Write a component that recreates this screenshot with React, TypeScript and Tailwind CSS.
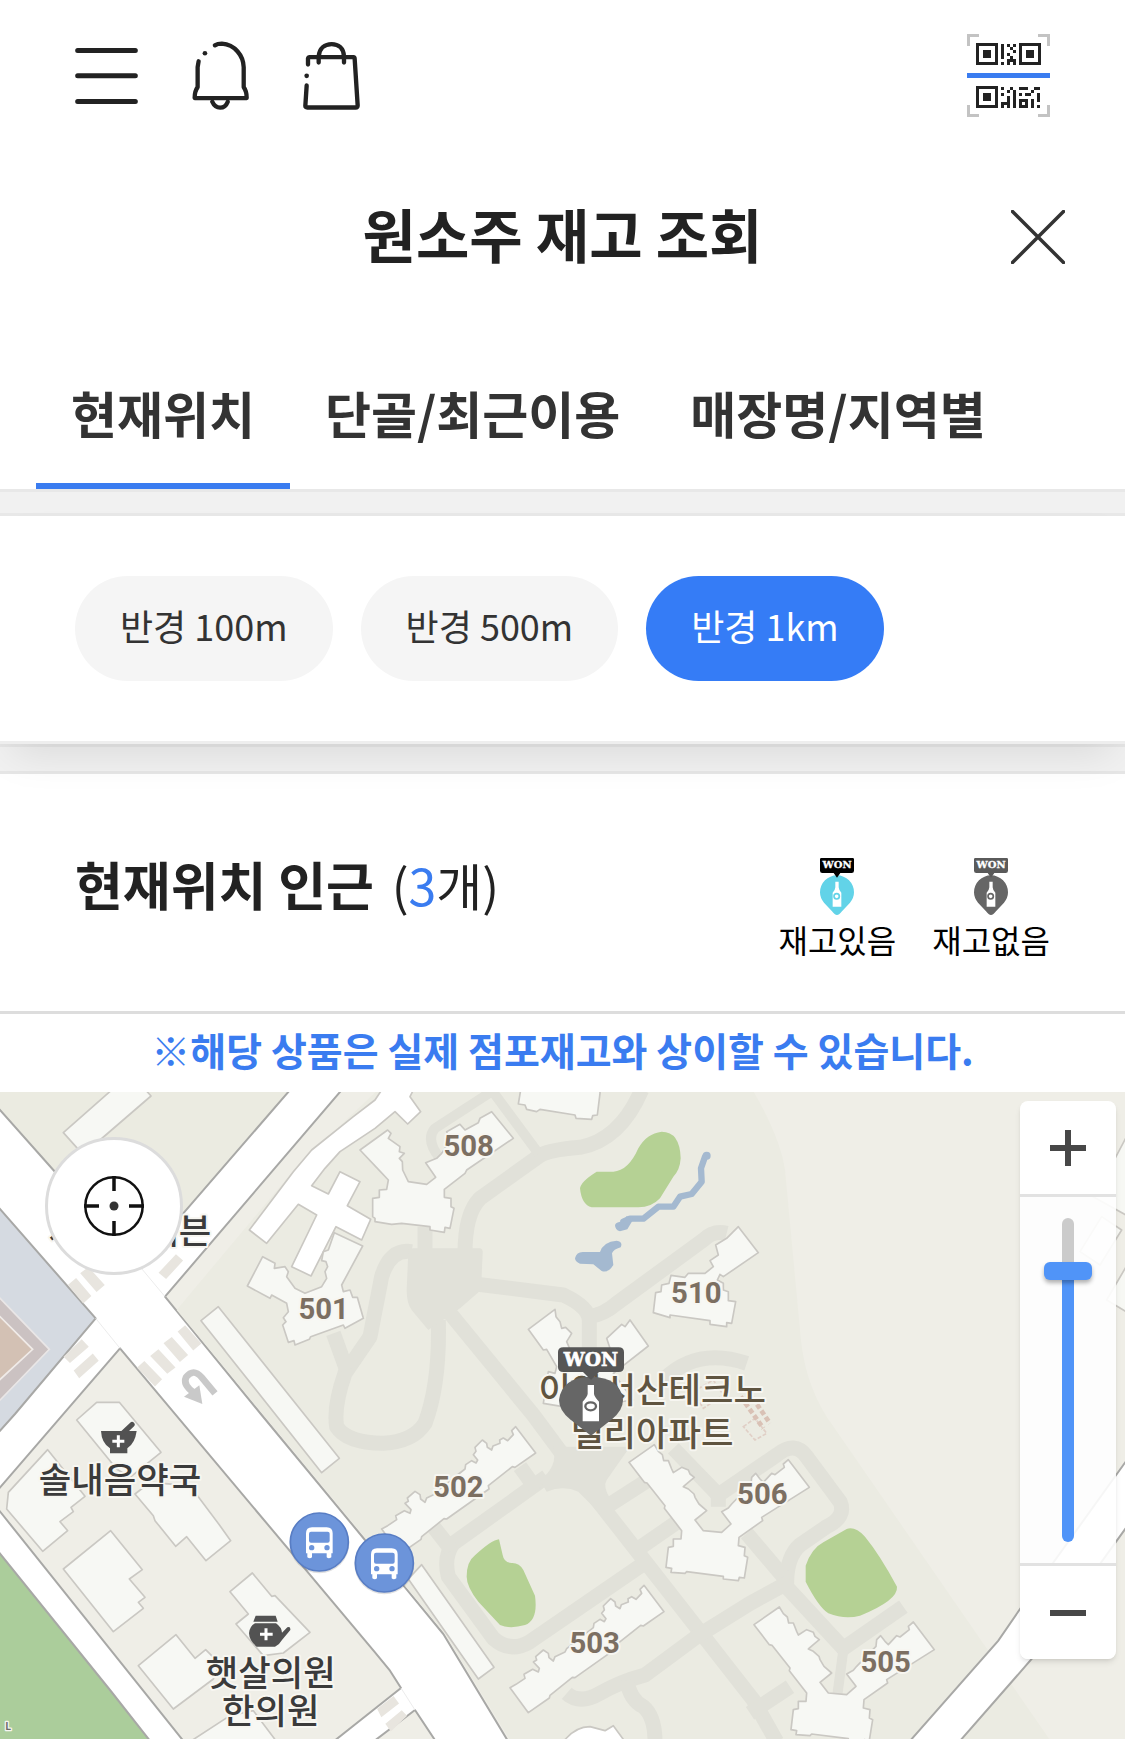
import { useState } from 'react';
import clsx from 'clsx';

const TABS = ['현재위치', '단골/최근이용', '매장명/지역별'];
const RADII = ['반경 100m', '반경 500m', '반경 1km'];
const MAX_LEVEL = 14;

/* columns 8 to 20 of the code, the finder squares are drawn apart */
const QR_TOP = ['X.X.X', 'X..X.', 'X...X', 'X.X..', 'X..X.', '..XXX', 'X.X.X'];

const QR_BOTTOM = [
  'X..X..XXX..XX',
  '..X.X.....X..',
  'X...X.X.XX..X',
  '..X.X.......X',
  '..X.X.XXX.X.X',
  'XXX.X.X.X.X..',
  'X.X.X.XXX.X.X',
];

function Modules({ rows, y }: { rows: string[]; y: number }) {
  return (
    <g transform={`translate(34 ${y}) scale(3)`} fill="#222">
      {rows.map((row, r) =>
        [...row].map((cell, c) =>
          cell === 'X' ? <rect key={`${r}-${c}`} x={c} y={r} width="1" height="1" /> : null
        )
      )}
    </g>
  );
}

function Finder({ x, y }: { x: number; y: number }) {
  return (
    <g transform={`translate(${x} ${y})`}>
      <path d="M0 0H22V22H0ZM3 3V19H19V3Z" fill="#222" fillRule="evenodd" />
      <rect x="7" y="7" width="8" height="8" fill="#222" />
    </g>
  );
}

function QrIcon() {
  return (
    <svg viewBox="0 0 83 83" className="size-[83px]" shapeRendering="crispEdges">
      <path
        d="M1.5 12V1.5H12M71 1.5H81.5V12M1.5 71V81.5H12M71 81.5H81.5V71"
        fill="none"
        stroke="#c3c3c3"
        strokeWidth="3"
      />
      <Finder x={9} y={9} />
      <Modules rows={QR_TOP} y={10} />
      <Finder x={52} y={9} />
      <rect y="39" width="83" height="5" fill="#3a7cf0" />
      <Finder x={9} y={52} />
      <Modules rows={QR_BOTTOM} y={53} />
    </svg>
  );
}

function MenuIcon() {
  return (
    <svg viewBox="105 93 189 206" className="h-[69px] w-[63px]" fill="none" stroke="#222" strokeWidth="15" strokeLinecap="round">
      <path d="M113 121H286M113 197H286M113 274H286" />
    </svg>
  );
}

function BellIcon() {
  return (
    <svg viewBox="455 92 172 206" className="h-[69px] w-[57px]" fill="none" stroke="#222" strokeWidth="13" strokeLinecap="round" strokeLinejoin="round">
      <path d="M524 104Q532 99 545 99C585 102 610 135 611 170V230Q620 242 620 263H463Q463 242 472 230V170L475 152" />
      <path d="M516 274Q524 292 540 292Q556 292 563 274" />
      <circle cx="494" cy="128" r="7" fill="#222" stroke="none" />
    </svg>
  );
}

function BagIcon() {
  return (
    <svg viewBox="789 92 171 206" className="h-[69px] w-[57px]" fill="none" stroke="#222" strokeWidth="13" strokeLinecap="round" strokeLinejoin="round">
      <path d="M804 162V144Q805 140 809 140H940Q944 140 944 145L953 285Q953 291 947 291H802Q796 291 796 286L800 225" />
      <path d="M836 156V138C838 113 855 101 875 101S911 113 912 138V156" />
      <circle cx="800" cy="196" r="7" fill="#222" stroke="none" />
    </svg>
  );
}

function WonPin({ tag, body }: { tag: string; body: string }) {
  return (
    <svg viewBox="0 0 102 171" className="h-[57px] w-[34px]">
      <path d="M51 171Q44 171 36 160L12 134Q0 120 0 103A51 51 0 0 1 102 103Q102 120 90 134L66 160Q58 171 51 171Z" fill={body} />
      <path d="M4 0H98Q102 0 102 4V38Q102 45 95 45H61L51 59L41 45H7Q0 45 0 38V4Q0 0 4 0Z" fill={tag} />
      <text x="51" y="31" textAnchor="middle" fontSize="30" fontWeight="700" fill="#fff" stroke="#fff" strokeWidth="1" fontFamily="DejaVu Serif, serif">
        WON
      </text>
      <path d="M46 71H56V88Q56 95 64 104V146H38V104Q46 95 46 88Z" fill="#fff" />
      <circle cx="50" cy="115" r="8" fill="#fff" stroke={body} strokeWidth="5" />
    </svg>
  );
}

/* Map shapes. Three units to one pixel. */
const SLAB =
  'M422 38L482 117L420 160L412 158L340 215L342 225L215 315L207 314L140 368L138 376L75 420L20 345L38 335L65 317L62 305L88 290L105 298L108 287L90 268L100 262L97 252L120 232L135 242L137 255L150 265L155 252L185 238L190 228L270 165L272 152L290 140L303 147L308 138L295 122L303 112L300 100L322 78L335 88L337 100L350 108L354 96L375 88L374 78L385 72L398 80L415 62L410 50Z';
const WINGS =
  'M838 92L762 145L808 205L816 207L870 275L868 283L920 350L918 375L895 375L895 397L880 400L873 460L890 463L888 475L930 478L935 473L1045 487L1045 495L1090 500L1093 490L1108 492L1118 430L1108 425L1110 400L1090 395L1092 370L1163 320L1160 310L1303 220L1240 137L1225 150L1228 160L1200 182L1190 178L1165 205L1155 195L1142 178L1130 190L1128 210L1070 270L1060 282L1040 293L1068 330L1040 355L985 350L960 318L995 290L972 270L960 250L957 240L940 225L925 218L940 205L958 190L945 180L940 168L920 160L895 176L890 165L880 140L866 140L862 122L850 112Z';

const BLOCK_LABELS = [
  { text: '508', x: 1406, y: 197 },
  { text: '501', x: 971, y: 688 },
  { text: '510', x: 2089, y: 638 },
  { text: '502', x: 1375, y: 1220 },
  { text: '506', x: 2287, y: 1242 },
  { text: '503', x: 1784, y: 1690 },
  { text: '505', x: 2657, y: 1745 },
];

const PLACE_LABELS = [
  { lines: ['세븐일레븐'], x: 390, y: 461, step: 0, fill: '#3b3b3b' },
  { lines: ['솔내음약국'], x: 360, y: 1208, step: 0, fill: '#3b3b3b' },
  { lines: ['햇살의원', '한의원'], x: 812, y: 1787, step: 116, fill: '#3b3b3b' },
  { lines: ['이안서산테크노', '밸리아파트'], x: 1957, y: 939, step: 129, fill: '#5f5440' },
];

function BusStop({ x, y }: { x: number; y: number }) {
  return (
    <g transform={`translate(${x} ${y})`}>
      <circle cy="4" r="90" fill="#000" opacity=".12" />
      <circle r="87" fill="#6c94da" stroke="#587dc4" strokeWidth="5" />
      <path d="M-22 -44H22Q40 -44 40 -26V34H36V46Q28 52 22 46V34H-22V46Q-28 52 -36 46V34H-40V-26Q-40 -44 -22 -44Z" fill="#fff" />
      <rect x="-31" y="-31" width="62" height="33" rx="6" fill="#6c94da" />
      <circle cx="-23" cy="17" r="8" fill="#6c94da" />
      <circle cx="23" cy="17" r="8" fill="#6c94da" />
    </g>
  );
}

function MapCanvas() {
  return (
    <svg viewBox="0 6 3375 1941" preserveAspectRatio="xMidYMid slice" className="block size-full">
      <rect width="3375" height="1950" fill="#fff" />

      {/* land */}
      <g stroke="#a8a8a6" strokeWidth="6" strokeLinejoin="round">
        <path d="M-9 0V50L160 240L420 520L870 0Z" fill="#ebebe1" />
        <path d="M-9 347L287 685L45 972L-9 1032Z" fill="#d5dae1" />
        <path d="M360 775L1125 1687L1170 1742L1203 1794L1000 1955H552L-30 1227Z" fill="#efeee7" />
        <path d="M-9 1380L330 1800L452 1955H-9Z" fill="#abcd9b" />
        <path d="M1245 1860L1120 1955H1308Z" fill="#efeee7" />
        <path d="M1025 0L495 620L785 975L1095 1350L1215 1492L1330 1632L1525 1955H3390V0Z" fill="#efeee7" />
      </g>
      <path d="M1130 3L890 230L530 660L1215 1487L1335 1632L1530 1950H3150L2970 1690L2480 980Q2410 870 2400 720L2355 240Q2340 140 2258 0Z" fill="#ebebe2" />
      <path d="M2728 1955L2995 1652L3060 1557L3390 1097V1297L3095 1707L2878 1955Z" fill="#fff" stroke="#a8a8a6" strokeWidth="6" />
      <path d="M-20 604L148 778L-20 951Z" fill="#cbc2c2" stroke="#e9e6e6" strokeWidth="5" />
      <path d="M-20 660L98 778L-20 887Z" fill="#d3c1b4" stroke="#f0ebe8" strokeWidth="5" />

      {/* crosswalks */}
      <path
        d="M245 550L265 535L310 585L290 602ZM208 585L228 568L270 618L250 636ZM480 548L528 497L545 512L498 563ZM195 800L245 752L262 770L210 815ZM225 842L278 795L292 812L238 860ZM415 833L433 817L482 868L465 885ZM455 798L475 782L522 832L502 847ZM495 760L515 745L560 795L540 812ZM537 725L555 710L600 760L580 777ZM1135 1857L1180 1822L1193 1840L1145 1877ZM1160 1902L1205 1865L1217 1877L1173 1920Z"
        fill="#e8e5df"
        stroke="#e8e5df"
        strokeWidth="6"
      />
      <path d="M287 685L360 775M420 530L495 620M1203 1794L1245 1860" stroke="#ececec" strokeWidth="3" />
      <path d="M645 910L605 862Q580 833 558 862Q548 885 582 908" fill="none" stroke="#c9c9c9" strokeWidth="20" />
      <path d="M552 920L607 942L598 886Z" fill="#c9c9c9" />

      {/* footpaths */}
      <g fill="none" stroke="#e1e1d9" strokeWidth="45" strokeLinejoin="round">
        <path d="M1925 0Q1860 150 1740 172Q1640 180 1615 200L1440 325Q1395 370 1395 490" />
        <path d="M1475 0L1615 190M1470 8L1305 115Q1275 150 1320 205" strokeWidth="30" />
        <path d="M1275 410V500M1235 485Q1170 475 1145 560L1110 740L1035 850Q1000 950 1010 1010Q1040 1058 1150 1060Q1240 1055 1275 1000Q1320 880 1315 690" />
        <path d="M1000 730L1040 840" />
        <path d="M1435 583L1690 615Q1765 650 1768 690V820M1765 680Q1810 675 1850 640L2110 450Q2140 420 2180 430" />
        <path d="M1350 670L1600 975L1700 1110" />
        <path d="M1990 870Q2090 770 2240 820" />
        <path d="M1640 1160L1360 1360Q1330 1400 1345 1460L1480 1645Q1530 1690 1590 1655L1925 1425" />
        <path d="M1760 1190L2260 1830L2330 1955M1820 1250L1960 1160M1910 1380L2040 1290M1560 1130L1610 1200M1300 1310L1355 1380" />
        <path d="M2020 1075L2155 1215L2330 1095Q2385 1050 2420 1100L2520 1235Q2540 1280 2480 1310L2400 1365Q2360 1400 2360 1480L2250 1540L2090 1640L1935 1755Q1860 1775 1800 1810Q1740 1845 1700 1810" />
        <path d="M2155 1215V1250M2240 1330L2350 1460M2350 1480L2530 1675L2710 1550M1880 1770Q1890 1830 1930 1850Q1965 1880 1965 1955M2370 1790L2250 1870" />
        <path d="M2530 1680L2510 1830" strokeWidth="30" />
      </g>
      <path d="M1225 485Q1225 475 1240 475H1440Q1450 478 1448 490L1443 600L1380 655L1285 720L1235 660Q1220 640 1220 600Z" fill="#e1e1d9" />
      <path d="M1660 1070H1890L1820 1170Q1808 1190 1830 1225L1800 1270L1735 1205Q1690 1185 1640 1205L1620 1170Q1675 1130 1660 1070Z" fill="#e1e1d9" />

      {/* green and water */}
      <g fill="#b5d194">
        <path d="M1790 245H1840Q1885 243 1915 175Q1940 130 1985 125Q2040 125 2042 205Q2040 240 2020 260L1980 325Q1955 352 1915 352H1775Q1745 345 1740 295Q1742 275 1790 245Z" />
        <path d="M1497 1348L1508 1395Q1512 1418 1535 1419Q1558 1418 1570 1440L1605 1517Q1615 1590 1575 1605Q1530 1618 1500 1605L1435 1535Q1400 1490 1400 1460Q1400 1415 1425 1396Q1475 1350 1497 1348Z" />
        <path d="M2540 1317Q2565 1308 2595 1340Q2640 1395 2691 1490Q2695 1530 2580 1577Q2535 1590 2485 1570Q2455 1550 2417 1475V1427Q2435 1375 2470 1357Z" />
      </g>
      <g fill="#a4b9d0">
        <path d="M1870 395L1890 386H1930L1975 350H2020L2040 320L2075 312L2105 275L2103 235L2115 200" fill="none" stroke="#a4b9d0" strokeWidth="19" strokeLinecap="round" strokeLinejoin="round" />
        <circle cx="2120" cy="197" r="12" />
        <path d="M1880 378L1900 388L1882 418L1860 424Q1845 420 1845 405Q1848 396 1870 394Z" />
        <path d="M1725 505Q1730 485 1750 486H1800Q1810 455 1850 452Q1870 455 1862 472Q1840 478 1836 490L1840 525Q1825 550 1805 543L1780 523L1740 521Q1725 515 1725 505Z" />
      </g>

      {/* buildings */}
      <g fill="#f7f8f4" stroke="#cac8c3" strokeWidth="5" strokeLinejoin="round">
        <path d="M335 0L190 128L235 178L300 150L453 18L437 0Z" />
        <path
          d="M1145 0L1125 30L1060 80L935 180L880 245L748 420L800 460L895 343L950 375L875 530L933 558L1008 410L1085 450L1112 388L1042 347L1080 275L1020 245L985 312L935 287L975 235L1020 185L1125 115L1185 65L1223 102L1262 65L1230 20L1240 0Z"
          fill="#fff"
        />
        <path d="M1003 428L1088 468L1025 585L1030 605L1050 600L1058 622L1072 622L1090 685L1035 715L1030 705L932 740L928 748L885 765L882 752L865 757L848 705L858 695L850 683L865 665L860 640L815 615L810 625L742 588L788 500L825 520L823 535L855 530L865 545L860 560L885 595L915 610L965 590L980 565L975 545L983 530L978 515L965 512L970 485L985 480Z" />
        <path d="M655 650L1018 1105L965 1148L603 692Z" />
        <path d="M1080 180L1163 120L1173 130L1165 145L1200 170L1198 185L1213 190L1198 205L1207 215L1208 240L1225 275L1280 283L1307 262L1277 218L1310 205L1325 190L1350 150L1340 125L1380 103L1395 120L1435 98L1440 85L1475 65L1540 145L1400 240L1395 250L1333 298V322L1353 325V350L1362 355L1350 415L1335 412L1333 427L1290 420V410L1205 400L1175 403L1125 395V385L1118 380V325L1138 322V300L1160 298L1165 270L1135 238Z" />
        <path d="M1562 0L1555 42L1575 45L1580 58L1610 65L1620 58L1725 75L1728 85L1775 88L1778 77L1792 75L1800 10V0Z" />
        <path d="M2215 410L2275 488L2170 560L2160 553L2152 570L2170 580V600L2185 605V632L2207 635L2195 700L2180 698V710L2130 703V692L2010 675V683L1960 668L1967 608L1983 605L1985 585L2007 580L2013 556L2055 562L2065 550L2115 550L2140 530L2130 512L2155 495L2147 465L2180 445L2200 425Z" />
        <path d="M1665 658L1585 718L1630 780L1640 778L1670 830L1665 850L1645 845L1630 940L1720 955L1900 930L1840 850L1945 768L1890 690L1875 710L1865 703L1820 745L1830 775L1780 830L1715 790L1700 755L1715 730L1697 712L1685 715L1680 695L1668 680Z" />
        <path d="M1265 1424L1482 1732L1435 1767L1225 1467Z" />
        <path d={SLAB} transform="translate(1125 972)" />
        <path d={SLAB} transform="translate(1510 1448)" />
        <path d={WINGS} transform="translate(1125 972)" />
        <path d={WINGS} transform="translate(1500 1459)" />
        <path d="M1690 1955Q1725 1910 1770 1910L1815 1922L1840 1907L1875 1955Z" fill="#fff" />
        <g transform="translate(0 972)">
          <path d="M143 107L25 235L20 285L128 412L203 350L180 323L220 293L213 280L255 247Z" />
          <path d="M230 18L290 -35H358L483 115L390 190L350 165Z" />
          <path d="M405 240L450 205L570 215L660 335L692 380L618 440L560 368L527 397L465 320L460 305Z" />
          <path d="M332 350L190 465L340 653L430 583L415 565L435 550L388 495L427 467Z" />
          <path d="M757 477L690 533L745 600L708 630L790 725L850 717L930 655L825 545L815 547Z" />
          <path d="M528 662L415 755L520 885L640 795L660 750L617 707L585 733Z" />
          <path d="M570 983L690 905L760 890L830 983Z" />
        </g>
        <path d="M3390 120L3348 200L3270 315L3390 382ZM3305 380L3365 420L3300 525L3240 485ZM3390 510L3320 630L3390 672Z" />
      </g>
      <path d="M2080 905L2140 870L2170 915L2110 955ZM2230 1010L2265 985L2300 1030L2265 1050Z" fill="none" stroke="#e0cfc6" strokeWidth="5" strokeDasharray="12 5" />
      <path d="M2222 920L2290 1015M2245 905L2310 1000" stroke="#d9c1b5" strokeWidth="14" strokeDasharray="15 8" />

      {/* pharmacy and clinic */}
      <g fill="#525252">
        <path d="M303 1023H410Q405 1060 382 1075V1090H330V1075Q305 1060 303 1023Z" />
        <path d="M368 1030L396 1004" stroke="#525252" strokeWidth="16" strokeLinecap="round" />
        <path d="M767 1577H827L833 1595H760ZM765 1600H828Q845 1612 846 1628L862 1612Q872 1608 871 1620L846 1650Q840 1662 825 1670H770Q748 1652 747 1630Q748 1610 765 1600Z" />
      </g>
      <path d="M355 1036V1072M337 1054H373M798 1615V1651M780 1633H818" stroke="#fff" strokeWidth="9" />

      <g textAnchor="middle" strokeLinejoin="round" style={{ paintOrder: 'stroke' }}>
        {BLOCK_LABELS.map((l) => (
          <text key={l.text} x={l.x} y={l.y} fontSize="88" fontWeight="700" fill="#7c6f62" stroke="#f7f6f1" strokeWidth="12" fontFamily="Roboto, sans-serif">
            {l.text}
          </text>
        ))}
        {PLACE_LABELS.map((l) => (
          <text key={l.lines[0]} y={l.y} fontSize="106" fontWeight="500" fill={l.fill} stroke="#f7f6f1" strokeWidth="12" fontFamily="Noto Sans CJK KR, sans-serif">
            {l.lines.map((line, i) => (
              <tspan key={line} x={l.x} dy={i * l.step}>
                {line}
              </tspan>
            ))}
          </text>
        ))}
        <text x="25" y="1920" fontSize="30" fontWeight="700" fill="#6b6b6b" stroke="#f7f6f1" strokeWidth="8" fontFamily="Roboto, sans-serif">
          L
        </text>
      </g>

      <BusStop x={958} y={1356} />
      <BusStop x={1153} y={1419} />

      {/* out-of-stock marker */}
      <path d="M1773 1037L1710 988Q1677 960 1677 930Q1685 862 1773 860Q1861 862 1869 930Q1869 960 1836 988Z" fill="#666" />
      <path d="M1690 772H1856Q1872 772 1872 786V832Q1872 846 1856 846H1797L1773 870L1749 846H1690Q1674 846 1674 832V786Q1674 772 1690 772Z" fill="#565656" />
      <text x="1773" y="829" textAnchor="middle" fontSize="56" fontWeight="700" fill="#fff" stroke="#fff" strokeWidth="2" fontFamily="DejaVu Serif, serif">
        WON
      </text>
      <path d="M1763 885H1782V912Q1784 922 1797 935V994H1748V935Q1761 922 1763 912Z" fill="#fff" />
      <ellipse cx="1772" cy="949" rx="16" ry="12" fill="#fff" stroke="#666" strokeWidth="7" />
    </svg>
  );
}

function ZoomControl() {
  const [level, setLevel] = useState(12);

  return (
    <div className="absolute top-[9px] right-[9px] flex w-24 flex-col overflow-hidden rounded-lg shadow-md">
      <button
        type="button"
        aria-label="확대"
        className="flex h-[93px] items-center justify-center bg-white"
        onClick={() => setLevel(Math.min(MAX_LEVEL, level + 1))}
      >
        <svg viewBox="0 0 36 36" className="size-9" stroke="#474747" strokeWidth="6">
          <path d="M0 18H36M18 0V36" />
        </svg>
      </button>
      <div className="flex h-[372px] items-center justify-center border-y-3 border-[#e2e2e2] bg-white/90">
        <input
          type="range"
          aria-label="지도 확대 수준"
          min={0}
          max={MAX_LEVEL}
          value={level}
          onChange={(e) => setLevel(Number(e.target.value))}
          className="h-[324px] w-3 appearance-none rounded-full bg-linear-to-t from-[#5094f8] from-84% to-[#cbcbcb] to-84% [direction:rtl] [writing-mode:vertical-lr] [&::-webkit-slider-thumb]:h-[18px] [&::-webkit-slider-thumb]:w-12 [&::-webkit-slider-thumb]:appearance-none [&::-webkit-slider-thumb]:rounded-md [&::-webkit-slider-thumb]:bg-[#5094f8] [&::-webkit-slider-thumb]:shadow-[0_3px_4px_rgba(0,0,0,0.3)]"
        />
      </div>
      <button
        type="button"
        aria-label="축소"
        className="flex h-[93px] items-center justify-center bg-white"
        onClick={() => setLevel(Math.max(0, level - 1))}
      >
        <svg viewBox="0 0 36 36" className="size-9" stroke="#474747" strokeWidth="6">
          <path d="M0 18H36" />
        </svg>
      </button>
    </div>
  );
}

export default function App() {
  const [tab, setTab] = useState(TABS[0]);
  const [radius, setRadius] = useState(RADII[2]);

  return (
    <div className="w-full overflow-hidden bg-white font-['Noto_Sans_CJK_KR',sans-serif] text-[#222]">
      {/* toolbar */}
      <header className="flex h-[150px] items-center justify-between px-[75px]">
        <div className="flex items-center gap-[54px]">
          <button type="button" aria-label="메뉴"><MenuIcon /></button>
          <button type="button" aria-label="알림"><BellIcon /></button>
          <button type="button" aria-label="장바구니"><BagIcon /></button>
        </div>
        <button type="button" aria-label="QR"><QrIcon /></button>
      </header>

      {/* title */}
      <div className="relative flex h-[174px] items-center justify-center">
        <h1 className="pb-2 text-[58px] leading-[72px] font-bold">원소주 재고 조회</h1>
        <button type="button" aria-label="닫기" className="absolute right-[60px]">
          <svg viewBox="0 0 54 54" className="size-[54px]" stroke="#333" strokeWidth="3.5" strokeLinecap="round">
            <path d="M1.5 1.5L52.5 52.5M52.5 1.5L1.5 52.5" />
          </svg>
        </button>
      </div>

      {/* tabs */}
      <nav className="flex h-[165px] px-9">
        {TABS.map((name) => (
          <button
            key={name}
            type="button"
            onClick={() => setTab(name)}
            className={clsx(
              'border-b-6 px-[35px] pt-4 text-[50px] leading-[60px] font-bold whitespace-nowrap text-[#333]',
              tab === name ? 'border-[#3a7cf0]' : 'border-transparent'
            )}
          >
            {name}
          </button>
        ))}
      </nav>
      <div className="h-[27px] border-y-3 border-[#e8e8e8] bg-[#f1f1f1]" />

      {/* radius filter */}
      <section className="relative z-10 flex h-[228px] items-center gap-7 border-b-3 border-[#eee] bg-white px-[75px] shadow-[0_20px_40px_-12px_rgba(0,0,0,0.1)]">
        {RADII.map((name) => (
          <button
            key={name}
            type="button"
            onClick={() => setRadius(name)}
            className={clsx(
              'h-[105px] rounded-full px-[45px] pb-2 text-[36px] leading-[48px]',
              radius === name ? 'bg-[#357cf6] text-white' : 'bg-[#f5f5f5] text-[#333]'
            )}
          >
            {name}
          </button>
        ))}
      </section>
      <div className="h-[30px] border-y-3 border-[#e6e6e6] bg-[#f1f1f1]" />

      {/* result summary */}
      <section className="flex h-[240px] items-start justify-between border-b-3 border-[#ddd] px-[75px] pt-20">
        <h2 className="text-[52px] leading-[60px] font-bold">
          현재위치 인근{' '}
          <span className="ml-1.5 text-[50px] font-normal">
            (<span className="text-[#3a7cf0]">3</span>개)
          </span>
        </h2>
        <div className="flex gap-9 pt-1 text-[32px] leading-[48px] text-black">
          <div className="flex flex-col items-center">
            <WonPin tag="#000" body="#62d3e8" />
            재고있음
          </div>
          <div className="flex flex-col items-center">
            <WonPin tag="#5a5a5a" body="#666" />
            재고없음
          </div>
        </div>
      </section>
      <p className="pt-[11px] pb-[19px] text-center text-[39px] leading-[48px] font-bold text-[#3a7cf0]">
        ※해당 상품은 실제 점포재고와 상이할 수 있습니다.
      </p>

      {/* map */}
      <main className="relative h-[647px] overflow-hidden">
        <MapCanvas />
        <button
          type="button"
          aria-label="내 위치"
          className="absolute top-[45px] left-[45px] flex size-[138px] items-center justify-center rounded-full border-3 border-[#dcdcdc] bg-white"
        >
          <svg viewBox="0 0 60 60" className="size-[60px]" fill="none" stroke="#111" strokeWidth="2.5">
            <circle cx="30" cy="30" r="28.7" />
            <path d="M30 0V15M30 45V60M0 30H15M45 30H60" strokeWidth="3.5" />
            <circle cx="30" cy="30" r="4.5" fill="#333" stroke="none" />
          </svg>
        </button>
        <ZoomControl />
      </main>
    </div>
  );
}
